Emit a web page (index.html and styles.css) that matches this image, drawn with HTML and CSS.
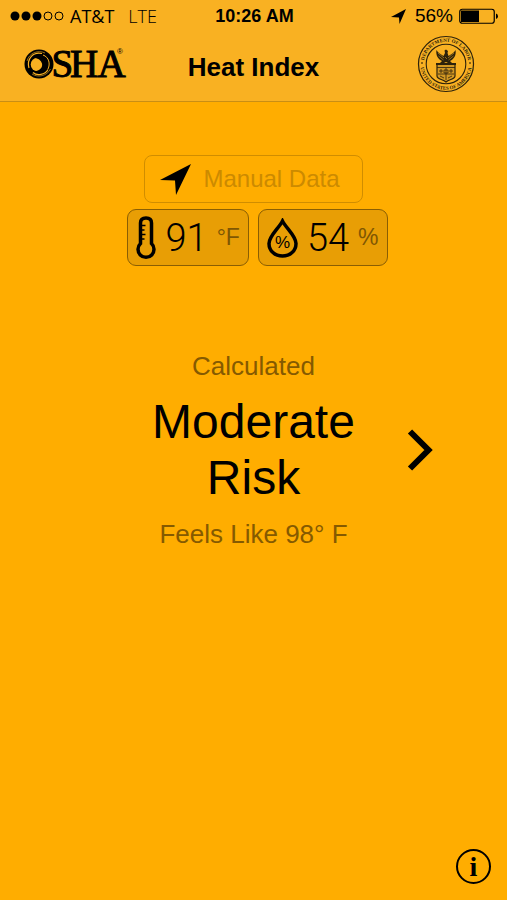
FILE: index.html
```html
<!DOCTYPE html>
<html lang="en">
<head>
    <meta charset="UTF-8">
    <meta name="viewport" content="width=device-width, initial-scale=1.0">
    <title>Heat Index</title>
    <link rel="stylesheet" href="styles.css">
</head>
<body>
    <header class="header">
        <div class="status-bar">
            <div class="carrier">
                <svg class="signal" width="54" height="10" viewBox="0 0 54 10" aria-hidden="true">
                    <circle cx="5" cy="5" r="4.5"/>
                    <circle cx="16" cy="5" r="4.5"/>
                    <circle cx="27" cy="5" r="4.5"/>
                    <circle cx="38" cy="5" r="4" fill="none" stroke="#000"/>
                    <circle cx="49" cy="5" r="4" fill="none" stroke="#000"/>
                </svg>
                <span>AT&amp;T</span>
                <span class="network">LTE</span>
            </div>
            <div class="time">10:26 AM</div>
            <div class="battery">
                <svg width="15" height="15" viewBox="0 0 15 15" aria-hidden="true">
                    <path d="M15 0L8.500 15L8 8.500L0 8Z"/>
                </svg>
                <span>56%</span>
                <svg width="40" height="17" viewBox="0 0 40 17" aria-hidden="true">
                    <rect x="0.750" y="1.250" width="34.500" height="14" rx="2.500" fill="none" stroke="#000" stroke-width="1.200"/>
                    <rect x="2" y="2.500" width="18" height="11.500"/>
                    <path d="M37 5.500Q39 6 39 8.300Q39 10.500 37 11Z"/>
                </svg>
            </div>
        </div>
        <div class="nav-bar">
            <svg class="logo" width="104" height="40" viewBox="0 0 104 40" role="img" aria-label="OSHA">
                <circle cx="14" cy="20" r="14.500"/>
                <g fill="none" stroke="#f9b122">
                    <path d="M4 24C1.500 15 8 7.500 17 9.500" stroke-width="1.200"/>
                    <path d="M8 28.500C12 32 20 31 23 25.500" stroke-width="1.200"/>
                    <path d="M18 11C24 13 25.500 20 23 25" stroke-width="1"/>
                    <path d="M2 17C4 9 13 5.500 20 9M7 30C13 34 22 32 25.500 25" stroke-width="0.600"/>
                </g>
                <circle cx="12.500" cy="20.500" r="6.800" fill="#f9b122"/>
                <path d="M8 14C15 11 21.500 15 20.500 21.500C20 27 14 29.500 8.500 27C14 27.500 18 24 17 19.500C16 16 12.500 13.500 8 14Z"/>
                <text class="logo-text" x="26.500 45 72.500" y="33">SHA</text>
                <text class="logo-mark" x="92" y="10">®</text>
            </svg>
            <h1>Heat Index</h1>
            <svg class="seal" width="58" height="58" viewBox="0 0 58 58" role="img" aria-label="Department of Labor seal">
                <defs>
                    <path id="seal-top" d="M6.800 29A22.200 22.200 0 0 1 51.200 29"/>
                    <path id="seal-bottom" d="M3.300 29A25.700 25.700 0 0 0 54.700 29"/>
                </defs>
                <g fill="none" stroke="#2d220b">
                    <circle cx="29" cy="29" r="27.500" stroke-width="1.200"/>
                    <circle cx="29" cy="29" r="19.800" stroke-width="1.100"/>
                </g>
                <text class="seal-text"><textPath href="#seal-top" startOffset="50%">DEPARTMENT OF LABOR</textPath></text>
                <text class="seal-text"><textPath href="#seal-bottom" startOffset="50%">UNITED STATES OF AMERICA</textPath></text>
                <circle cx="5" cy="28" r="0.800"/>
                <circle cx="53" cy="28" r="0.800"/>
                <!-- eagle -->
                <path d="M19.500 15C21 18 24 19 26.500 21L28 18L27.500 15.500L29 14.500L31 16L30.500 18L31.500 21C34 19 37 18 38.500 15C39.500 20 37 24 33 26L35 28H31L29 27L27 28H23L25 26C21 24 18.500 20 19.500 15Z" fill="#2d220b"/>
                <path d="M21 18L27 23M21.500 21L26.500 25M37 18L31 23M36.500 21L31.500 25M28 22L30 24" stroke="#d49a25" stroke-width="0.600"/>
                <!-- shield -->
                <path d="M20 29H38V41C38 44.500 32 44 29 47C26 44 20 44.500 20 41Z" fill="#d29823" stroke="#2d220b" stroke-width="1.200"/>
                <path d="M20 32.500H38M21 39H37M24 34V38M27 35H31V38H27ZM34 34V38M22 36H26M32 36H36M23 41L27 43M35 41L31 43M29 33V45" fill="none" stroke="#2d220b" stroke-width="0.800"/>
                <path d="M19 29H39" stroke="#2d220b" stroke-width="2"/>
            </svg>
        </div>
    </header>

    <main class="content">
        <div class="readings">
            <button type="button" class="source">
                <svg width="31" height="31" viewBox="0 0 31 31" aria-hidden="true">
                    <path d="M31 0L16 31L15 16.500L0 16Z"/>
                </svg>
                Manual Data
            </button>
            <div class="values">
                <button type="button" class="value">
                    <svg width="20" height="44" viewBox="0 0 20 44" aria-hidden="true">
                        <path d="M4.500 7Q4.500 2 10 2Q15.500 2 15.500 7V27.500A8 8 0 1 1 4.500 27.500Z" fill="none" stroke="#000" stroke-width="3.500"/>
                        <path d="M5 9.500H9.500M5 14H8.500M5 18.500H9.500M5 23H8.500" stroke="#000" stroke-width="1.500"/>
                    </svg>
                    <span class="number">91</span>
                    <span class="unit">°F</span>
                </button>
                <button type="button" class="value">
                    <svg width="31" height="40" viewBox="0 0 31 40" aria-hidden="true">
                        <path d="M15.500 3C12 10 2 18 2 25.500C2 33 8 38 15.500 38S29 33 29 25.500C29 18 19 10 15.500 3Z" fill="none" stroke="#000" stroke-width="3.500"/>
                        <text class="drop-text" x="15.500" y="30">%</text>
                    </svg>
                    <span class="number">54</span>
                    <span class="unit">%</span>
                </button>
            </div>
        </div>

        <a href="#precautions" class="result">
            <span class="result-text">
                <span class="note">Calculated</span>
                <span class="risk">Moderate<br>Risk</span>
                <span class="note">Feels Like 98° F</span>
            </span>
            <svg width="26" height="42" viewBox="0 0 26 42" aria-hidden="true">
                <path d="M3 2.500L21.500 21L3 39.500" fill="none" stroke="#000" stroke-width="6"/>
            </svg>
        </a>
    </main>

    <footer class="footer">
        <button type="button" class="info" aria-label="Information">i</button>
    </footer>
</body>
</html>
```
FILE: styles.css
```css
* {
    box-sizing: border-box;
}

body {
    font-family: "Liberation Sans", Arial, sans-serif;
    display: flex;
    flex-direction: column;
    min-height: 100vh;
    margin: 0;
    background-color: #ffad00;
    color: #000;
}

button {
    font-family: inherit;
    color: #000;
    background: none;
    padding: 0;
}

svg {
    display: block;
    flex-shrink: 0;
}

.header {
    background-color: #f9b122;
    border-bottom: 1px solid #c98e14;
}

.status-bar {
    display: grid;
    grid-template-columns: 1fr auto 1fr;
    align-items: center;
    height: 32px;
    padding: 0 8px 0 10px;
}

.carrier {
    display: flex;
    align-items: center;
    gap: 6px;
    font-family: "Open Sans", sans-serif;
    font-size: 18px;
}

.network {
    margin-left: 8px;
    font-weight: 300;
}

.time {
    font-size: 18px;
    font-weight: bold;
}

.battery {
    display: flex;
    align-items: center;
    justify-content: flex-end;
    gap: 6px;
    font-size: 19px;
}

.battery span {
    margin-left: 3px;
}

.nav-bar {
    display: grid;
    grid-template-columns: 1fr auto 1fr;
    align-items: center;
    height: 69px;
    padding: 0 32px 6px 25px;
}

.nav-bar h1 {
    margin: 8px 0 0 7px;
    font-size: 26px;
}

.logo {
    overflow: visible;
}

.logo-text {
    font-family: "Liberation Serif", serif;
    font-size: 39px;
    stroke: #000;
    stroke-width: 1px;
}

.logo-mark {
    font-size: 8px;
}

.seal {
    justify-self: end;
}

.seal-text {
    font-family: "Liberation Serif", serif;
    font-size: 5px;
    font-weight: bold;
    text-anchor: middle;
    fill: #2d220b;
}

.content {
    display: flex;
    flex-direction: column;
    gap: 82px;
    padding-top: 53px;
}

.readings {
    display: flex;
    flex-direction: column;
    align-items: center;
    gap: 6px;
}

.source {
    display: flex;
    align-items: center;
    gap: 12px;
    height: 48px;
    padding: 0 22px 0 15px;
    border: 1px solid #d08d00;
    border-radius: 8px;
    font-size: 24px;
    color: #cc8a00;
}

.values {
    display: flex;
    gap: 9px;
    padding-left: 8px;
}

.value {
    display: flex;
    align-items: center;
    gap: 9px;
    height: 57px;
    padding: 0 8px;
    border: 1px solid #8a5e03;
    border-radius: 9px;
    background-color: #e89e05;
}

.number {
    font-family: Roboto, sans-serif;
    font-size: 38px;
    font-weight: 300;
}

.unit {
    font-size: 23px;
    color: #7f5703;
}

.drop-text {
    font-size: 17px;
    text-anchor: middle;
}

.result {
    display: grid;
    grid-template-columns: 1fr auto 1fr;
    align-items: center;
    column-gap: 52px;
    color: #000;
    text-decoration: none;
}

.result-text {
    display: flex;
    flex-direction: column;
    grid-column: 2;
    gap: 10px;
    text-align: center;
}

.note {
    font-size: 26px;
    line-height: 36px;
    color: #855a00;
}

.risk {
    font-size: 48px;
    line-height: 56px;
}

.footer {
    display: flex;
    justify-content: flex-end;
    margin-top: auto;
    padding: 16px;
}

.info {
    width: 35px;
    height: 35px;
    border: 2px solid #000;
    border-radius: 50%;
    font-family: "Liberation Serif", serif;
    font-size: 28px;
    font-weight: bold;
    line-height: 28px;
}
```
